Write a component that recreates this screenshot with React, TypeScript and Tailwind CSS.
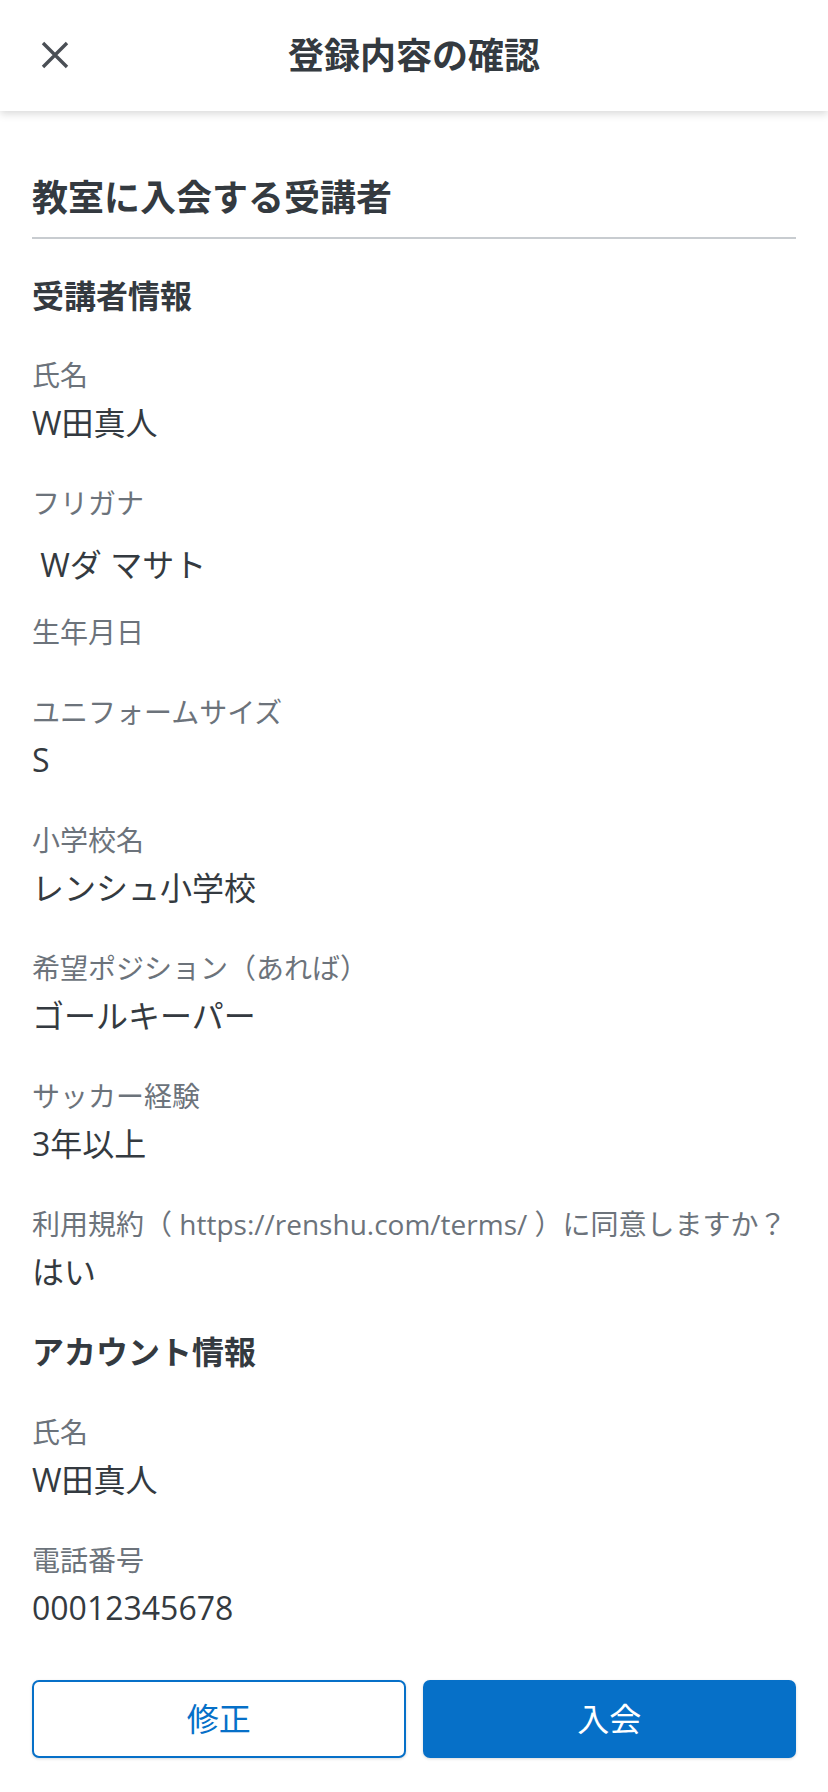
import React from "react";

type Item = { label: string; value?: string; valueClass?: string; gapAfter?: string };

const studentItems: Item[] = [
  { label: "氏名", value: "W田真人" },
  { label: "フリガナ", value: " Wダ マサト", valueClass: "mt-[20px]", gapAfter: "mb-[25px]" },
  { label: "生年月日", gapAfter: "mb-[40px]" },
  { label: "ユニフォームサイズ", value: "S" },
  { label: "小学校名", value: "レンシュ小学校" },
  { label: "希望ポジション（あれば）", value: "ゴールキーパー" },
  { label: "サッカー経験", value: "3年以上" },
  { label: "利用規約（ https://renshu.com/terms/ ）に同意しますか？", value: "はい" },
];

const accountItems: Item[] = [
  { label: "氏名", value: "W田真人" },
  { label: "電話番号", value: "00012345678" },
];

const Field = ({ item, last }: { item: Item; last?: boolean }) => (
  <div className={last ? "" : item.gapAfter ?? "mb-[38px]"}>
    <div className="text-[28px] leading-[40px] text-[#6c737b] whitespace-nowrap">{item.label}</div>
    {item.value && (
      <div
        className={`text-[32px] leading-[44px] text-[#343a40] whitespace-pre ${item.valueClass ?? "mt-[6px]"}`}
      >
        {item.value}
      </div>
    )}
  </div>
);

export default function App() {
  return (
    <div
      className="min-h-screen bg-white"
      style={{ fontFamily: '"Open Sans", "Noto Sans CJK JP", sans-serif' }}
    >
      {/* Header */}
      <header className="relative flex h-[111px] items-center justify-center bg-white shadow-[0_3px_8px_rgba(0,0,0,0.15)]">
        <button className="absolute left-[40px] top-[40px] flex h-[30px] w-[30px] items-center justify-center text-[#4a4f55]">
          <svg width="30" height="30" viewBox="0 0 30 30" fill="none" stroke="currentColor" strokeWidth="3.4">
            <path d="M3 3L27 27M27 3L3 27" />
          </svg>
        </button>
        <h1 className="text-[36px] font-bold leading-[44px] text-[#343a40]">登録内容の確認</h1>
      </header>

      <main className="px-[32px] pt-[63px]">
        <h2 className="text-[36px] font-bold leading-[48px] text-[#343a40]">教室に入会する受講者</h2>
        <div className="mt-[15px] h-[2px] bg-[#c8ccd0]" />

        <h3 className="mt-[35px] mb-[37px] text-[32px] font-bold leading-[44px] text-[#343a40]">
          受講者情報
        </h3>
        {studentItems.map((item, i) => (
          <Field key={i} item={item} last={i === studentItems.length - 1} />
        ))}

        <h3 className="mt-[36px] mb-[38px] text-[32px] font-bold leading-[44px] text-[#343a40]">
          アカウント情報
        </h3>
        {accountItems.map((item, i) => (
          <Field key={i} item={item} last={i === accountItems.length - 1} />
        ))}

        {/* Actions */}
        <div className="mt-[50px] grid grid-cols-2 gap-[17px] pb-[34px]">
          <button className="h-[78px] rounded-[7px] border-2 border-[#0670c8] bg-white text-[32px] text-[#0670c8] shadow-[0_1px_3px_rgba(0,0,0,0.15)]">
            修正
          </button>
          <button className="h-[78px] rounded-[7px] bg-[#0670c8] text-[32px] text-white shadow-[0_1px_3px_rgba(0,0,0,0.15)]">
            入会
          </button>
        </div>
      </main>
    </div>
  );
}
